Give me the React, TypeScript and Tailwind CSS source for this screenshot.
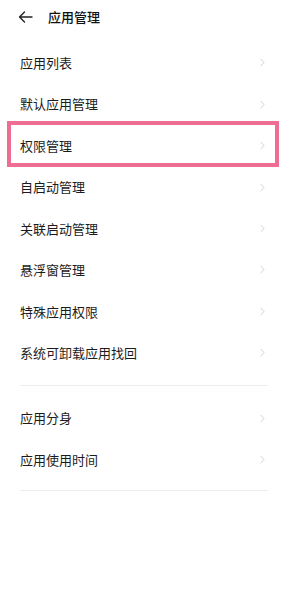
import { ChevronRight } from "lucide-react";

const groupA = [
  "应用列表",
  "默认应用管理",
  "权限管理",
  "自启动管理",
  "关联启动管理",
  "悬浮窗管理",
  "特殊应用权限",
  "系统可卸载应用找回",
];

const groupB = ["应用分身", "应用使用时间"];

const Row = ({ label, highlight }: { label: string; highlight?: boolean }) => (
  <div className="relative flex h-[41.45px] items-center justify-between pl-5 pr-[19px]">
    <span className="text-[13px] text-[#1c1c1c]">{label}</span>
    <ChevronRight className="h-[13px] w-[13px] text-[#c4c4c4]" strokeWidth={1.4} />
    {/* highlight frame drawn over the row */}
    {highlight && (
      <div className="pointer-events-none absolute left-[7px] right-[9px] top-[-4px] bottom-[-1px] border-[4px] border-[#ef6c93]" />
    )}
  </div>
);

export default function App() {
  return (
    <div
      className="flex h-[600px] w-[288px] flex-col bg-white"
      style={{ fontFamily: '"Noto Sans CJK SC", "Noto Sans", sans-serif' }}
    >
      {/* header */}
      <div className="flex h-[33px] items-center pl-[18px]">
        <svg width="15" height="12" viewBox="0 0 15 12" fill="none" stroke="#222" strokeWidth="1.4" strokeLinecap="round" strokeLinejoin="round">
          <path d="M14 6H1.5M6.5 1L1.5 6l5 5" />
        </svg>
        <span className="ml-[15px] text-[13px] font-medium text-[#111]">应用管理</span>
      </div>

      <div className="mt-[9px] flex flex-col">
        {groupA.map((l) => (
          <Row key={l} label={l} highlight={l === "权限管理"} />
        ))}
      </div>

      <div className="mx-5 mt-[11px] h-px bg-[#ececec]" />

      <div className="mt-[12px] flex flex-col">
        {groupB.map((l) => (
          <Row key={l} label={l} />
        ))}
      </div>

      <div className="mx-5 mt-[10px] h-px bg-[#ececec]" />
    </div>
  );
}
